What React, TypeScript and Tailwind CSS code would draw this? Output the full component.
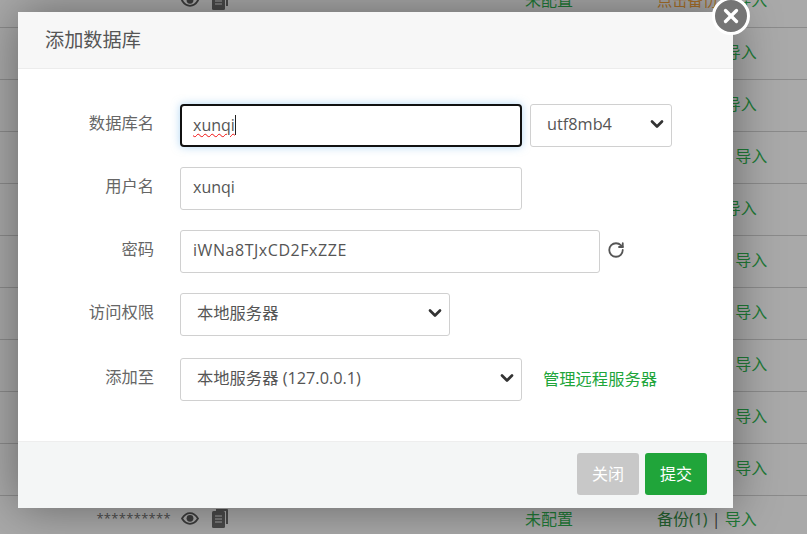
import { ChevronDown, RotateCw, X } from "lucide-react";

const fontStack = "font-['Open_Sans','Noto_Sans_CJK_SC',sans-serif]";

// rows of the database table that sits behind the dialog, only the first and last stick out
const rows = [
  { backup: "点击备份", orange: true, edge: true },
  { backup: "备份(1)" },
  { backup: "备份(1)" },
  { backup: "点击备份" },
  { backup: "备份(1)" },
  { backup: "点击备份" },
  { backup: "点击备份" },
  { backup: "点击备份" },
  { backup: "点击备份" },
  { backup: "点击备份" },
  { backup: "备份(1)", edge: true, last: true },
];

function EyeIcon() {
  return (
    <svg width="18" height="13" viewBox="0 0 18 13" className="text-[#3c3c3c]">
      <path
        d="M1 6.5C3.2 3 5.9 1.2 9 1.2s5.8 1.8 8 5.3c-2.2 3.5-4.9 5.3-8 5.3S3.2 10 1 6.5z"
        fill="none"
        stroke="currentColor"
        strokeWidth="1.8"
      />
      <circle cx="9" cy="6.3" r="3.4" fill="currentColor" />
    </svg>
  );
}

function CopyIcon() {
  return (
    <svg width="17" height="19" viewBox="0 0 17 19" className="text-[#4a4a4a]">
      <path d="M5 0h11a1 1 0 0 1 1 1v14h-2V2H5z" fill="currentColor" />
      <rect x="1" y="2" width="13" height="17" rx="1.5" fill="currentColor" />
      <path d="M4 7h7M4 10h7M4 13h7" stroke="#a3a3a3" strokeWidth="1.2" />
    </svg>
  );
}

function BackgroundTable() {
  return (
    <div className="-mt-[24px] flex flex-col">
      {rows.map((row, i) => (
        <div
          key={i}
          className={`flex h-[52px] shrink-0 items-center text-[16px] text-[#1f7a37] ${
            row.last ? "pb-[7px]" : "border-b border-[#8b8b8b] pb-[3px]"
          }`}
        >
          <div className="flex w-[525px] items-center justify-end pr-[297px] text-[#4b4b4b]">
            {row.edge && (
              <div className="flex items-center">
                {row.last && <span className="mr-[10px] text-[13px] tracking-[0.3px]">**********</span>}
                <span className="mr-[12px]">
                  <EyeIcon />
                </span>
                <CopyIcon />
              </div>
            )}
          </div>
          <div className="w-[132px]">{row.edge && "未配置"}</div>
          <div className="whitespace-nowrap">
            <span
              className={`${row.edge ? "" : "invisible"} ${row.orange ? "text-[#a8702a]" : "text-[#24612f]"} ${
                row.backup === "点击备份" ? "text-[15.3px]" : ""
              }`}
            >
              {row.backup}
            </span>
            <span className={`${row.edge ? "" : "invisible"} text-[#333]`}> | </span>
            导入
          </div>
        </div>
      ))}
    </div>
  );
}

function TextBox({ value, width, wide }: { value: string; width: string; wide?: boolean }) {
  return (
    <input
      readOnly
      value={value}
      className={`${width} ${wide ? "tracking-[0.55px]" : ""} h-[43px] rounded-[3px] border border-[#d0d0d0] bg-white px-3 pb-[3px] text-[16px] text-[#555] outline-none`}
    />
  );
}

function SelectBox({ value, width }: { value: string; width: string }) {
  return (
    <div className={`relative ${width}`}>
      <select
        defaultValue={value}
        className="h-[43px] w-full appearance-none rounded-[3px] border border-[#d0d0d0] bg-white pb-[3px] pl-4 pr-8 text-[16.3px] text-[#555] outline-none"
      >
        <option>{value}</option>
      </select>
      <ChevronDown
        size={20}
        strokeWidth={3.2}
        className="pointer-events-none absolute right-[5px] top-[10px] text-[#333]"
      />
    </div>
  );
}

function Row({ label, children, className = "" }: { label: string; children: React.ReactNode; className?: string }) {
  return (
    <div className={`flex h-[43px] items-center ${className}`}>
      <label className="-mt-[5px] w-[136px] text-right text-[16.3px] text-[#666]">{label}</label>
      <div className="ml-[26px] flex items-center">{children}</div>
    </div>
  );
}

export default function App() {
  return (
    <div className={`relative h-[534px] w-[807px] overflow-hidden bg-[#a9a9a9] ${fontStack}`}>
      <BackgroundTable />

      <div className="absolute left-[18px] top-[12px] flex h-[496px] w-[715px] flex-col bg-white shadow-[0_0_45px_rgba(0,0,0,0.4)]">
        <div className="flex h-[57px] items-center border-b border-[#ececec] bg-[#f7f7f7] pl-[27px] text-[19.2px] text-[#555]">
          添加数据库
        </div>

        <div className="flex flex-1 flex-col gap-5 pt-[35px]">
          <Row label="数据库名">
            <div className="flex h-[43px] w-[342px] items-center rounded-[4px] border-2 border-[#111] bg-white px-[11px] pb-[2px] text-[16px] text-[#555] shadow-[0_0_8px_rgba(102,175,233,0.5)]">
              <span className="underline decoration-[#f01010] decoration-wavy decoration-1 underline-offset-2">xunqi</span>
              <span className="h-[20px] w-px bg-[#222]" />
            </div>
            <div className="ml-2">
              <SelectBox value="utf8mb4" width="w-[142px]" />
            </div>
          </Row>
          <Row label="用户名">
            <TextBox value="xunqi" width="w-[342px]" />
          </Row>
          <Row label="密码">
            <TextBox value="iWNa8TJxCD2FxZZE" width="w-[420px]" wide />
            <RotateCw size={18} strokeWidth={2.4} className="-mt-[4px] ml-[7px] text-[#555]" />
          </Row>
          <Row label="访问权限">
            <SelectBox value="本地服务器" width="w-[270px]" />
          </Row>
          <Row label="添加至" className="mt-[2px]">
            <SelectBox value="本地服务器 (127.0.0.1)" width="w-[342px]" />
            <a className="ml-[21px] text-[16.3px] text-[#20a53a]">管理远程服务器</a>
          </Row>
        </div>

        <div className="flex h-[67px] items-center justify-end gap-[6px] border-t border-[#eeeeee] bg-[#f4f6f6] pb-[2px] pr-[26px]">
          <button className="h-[42px] w-[62px] rounded-[3px] bg-[#c8c8c8] text-[16px] text-white">关闭</button>
          <button className="h-[42px] w-[62px] rounded-[3px] bg-[#20a53a] text-[16px] text-white">提交</button>
        </div>
      </div>

      <button className="absolute left-[712px] top-[-3px] flex h-[38px] w-[38px] items-center justify-center rounded-full border-[3px] border-white bg-[#757575] text-white">
        <X size={22} strokeWidth={3.6} />
      </button>
    </div>
  );
}
